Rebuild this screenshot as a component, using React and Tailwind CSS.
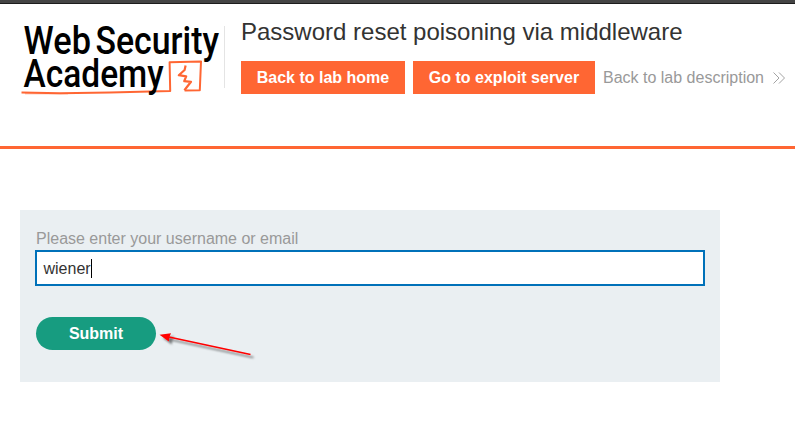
function Logo() {
  return (
    <svg
      className="ml-5 h-[80px] w-[204px] shrink-0 overflow-visible"
      viewBox="20 20 204 80"
      fontFamily="Roboto, 'Liberation Sans', sans-serif"
      fontSize="38"
      fontWeight="500"
      fill="#000"
      role="img"
      aria-label="Web Security Academy"
    >
      <g fill="none" stroke="#ff6633" strokeLinejoin="round">
        <path d="M21.5 92.4 L60 93.2 L110 92.6 L170.2 91 L169.6 62.2 L201 61.4 L199.8 90.2 L184.6 90.4" strokeWidth="2" />
        <path d="M25 93.8 L68 93.8" strokeWidth="1" opacity="0.5" />
        <path d="M185.6 65.6 L184.6 70 L178.8 75.2 L186.2 76.4 L184.2 81.2 L191 81.8 L184.4 90.2" strokeWidth="2.2" />
      </g>
      <text x="23.6" y="54.2" textLength="67.4" lengthAdjust="spacingAndGlyphs">Web</text>
      <text x="95.5" y="54.2" textLength="123.5" lengthAdjust="spacingAndGlyphs">Security</text>
      <text x="23.6" y="87" textLength="140" lengthAdjust="spacingAndGlyphs">Academy</text>
    </svg>
  );
}

function LabHeader() {
  return (
    <header className="flex h-[145px] items-start border-b-3 border-[#ff6633] pt-4">
      <Logo />
      <div className="mt-[6px] h-[62px] w-px shrink-0 bg-[#e4e4e4]" />
      <div className="ml-4 whitespace-nowrap">
        <h2 className="mt-[-4px] h-[45px] text-[24px] leading-[32px] text-[#333332]">
          Password reset poisoning via middleware
        </h2>
        <div className="flex h-[33px] items-center gap-2">
          <a className="flex h-full w-[164px] items-center justify-center bg-[#ff6633] font-bold text-white">Back to lab home</a>
          <a className="flex h-full w-[182px] items-center justify-center bg-[#ff6633] font-bold text-white">Go to exploit server</a>
          <a className="flex items-center text-[#999999]">
            Back to lab description
            <svg className="ml-[9px] h-3 w-3" viewBox="0 0 12 12" fill="none" stroke="#999" strokeWidth="0.9">
              <path d="M0.5 0.5 L6 6 L0.5 11.5 M6 0.5 L11.5 6 L6 11.5" />
            </svg>
          </a>
        </div>
      </div>
    </header>
  );
}

function Arrow() {
  return (
    <svg className="absolute top-[120px] left-[138px] h-[34px] w-[102px] overflow-visible" viewBox="158 330 102 34">
      <defs>
        <filter id="arrowShadow" x="-20%" y="-50%" width="150%" height="220%">
          <feDropShadow dx="3" dy="3" stdDeviation="1.2" floodColor="#000" floodOpacity="0.5" />
        </filter>
      </defs>
      <g filter="url(#arrowShadow)">
        <path d="M169 337 L250.5 354.6" stroke="#ff0000" strokeWidth="1.5" />
        <path d="M159.5 334.8 L171 333.2 L169.4 337 L168.8 341.4 Z" fill="#ff0000" />
      </g>
    </svg>
  );
}

export default function App() {
  return (
    <div className="h-[423px] w-[795px] overflow-hidden bg-white font-['Liberation_Sans',Arial,sans-serif] text-base">
      <div className="h-1 border-b border-[#1c1c1c] bg-[#444444]" />
      <LabHeader />
      <main className="px-5 pt-[61px]">
        <form className="relative h-[172px] w-[700px] bg-[#eaeff2] px-[15px] pt-[17px]">
          <label className="ml-px block h-[23px] leading-[23px] text-[#999999]">
            Please enter your username or email
          </label>
          <div className="flex h-9 items-center border-2 border-[#0071b9] bg-white pt-[2px] pl-[6.5px] text-[#333332]">
            <span>wiener</span>
            <span className="-mt-px h-[19px] w-px bg-black" />
          </div>
          <button
            type="button"
            className="mt-[31px] ml-px block h-[33px] w-[120px] rounded-full bg-[#179c80] font-bold text-white"
          >
            Submit
          </button>
          <Arrow />
        </form>
      </main>
    </div>
  );
}
